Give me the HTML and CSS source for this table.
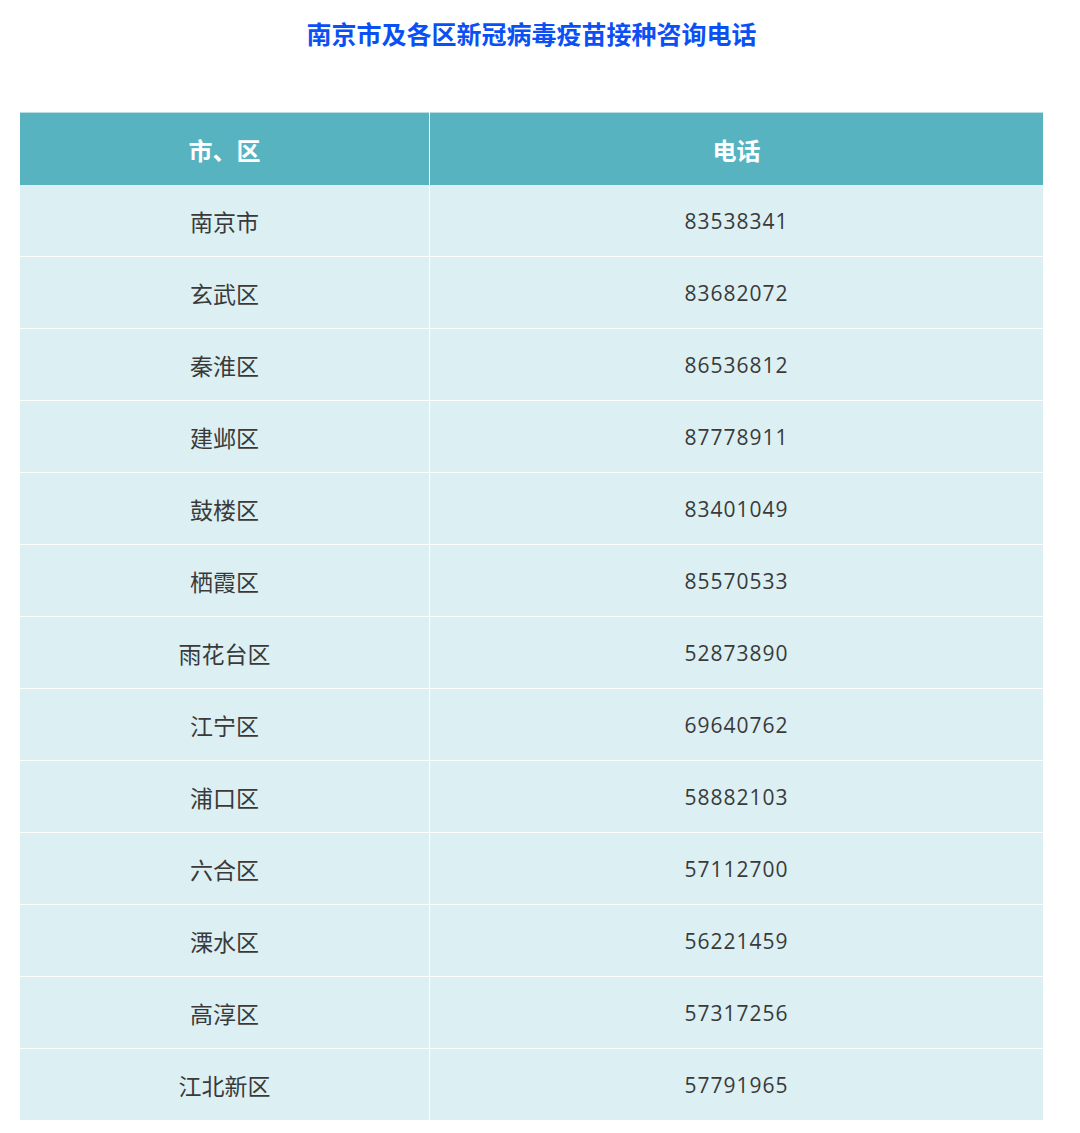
FILE: index.html
```html
<!DOCTYPE html>
<html lang="zh-CN">
<head>
<meta charset="utf-8">
<title>南京市及各区新冠病毒疫苗接种咨询电话</title>
<link rel="stylesheet" href="styles.css">
</head>
<body>
<div class="page">
  <h1 class="title">南京市及各区新冠病毒疫苗接种咨询电话</h1>
  <table class="phones">
    <thead>
      <tr><th class="col-area">市、区</th><th class="col-phone">电话</th></tr>
    </thead>
    <tbody>
      <tr><td>南京市</td><td class="num">83538341</td></tr>
      <tr><td>玄武区</td><td class="num">83682072</td></tr>
      <tr><td>秦淮区</td><td class="num">86536812</td></tr>
      <tr><td>建邺区</td><td class="num">87778911</td></tr>
      <tr><td>鼓楼区</td><td class="num">83401049</td></tr>
      <tr><td>栖霞区</td><td class="num">85570533</td></tr>
      <tr><td>雨花台区</td><td class="num">52873890</td></tr>
      <tr><td>江宁区</td><td class="num">69640762</td></tr>
      <tr><td>浦口区</td><td class="num">58882103</td></tr>
      <tr><td>六合区</td><td class="num">57112700</td></tr>
      <tr><td>溧水区</td><td class="num">56221459</td></tr>
      <tr><td>高淳区</td><td class="num">57317256</td></tr>
      <tr><td>江北新区</td><td class="num">57791965</td></tr>
    </tbody>
  </table>
</div>
</body>
</html>
```
FILE: styles.css
```css
html, body {
  margin: 0;
  padding: 0;
  background: #ffffff;
}
body {
  font-family: "Noto Sans CJK SC", "Noto Sans", sans-serif;
}
.page {
  width: 1023px;
  margin-left: 20px;
}
.title {
  margin: 0;
  padding-top: 16px;
  height: 112px;
  box-sizing: border-box;
  text-align: center;
  font-size: 25px;
  line-height: 34px;
  font-weight: 700;
  color: #0b50f4;
}
.phones {
  width: 1023px;
  border-collapse: collapse;
  table-layout: fixed;
}
.phones th,
.phones td {
  text-align: center;
  padding: 0;
  border: 1px solid #ffffff;
  border-top: 0;
  border-left: 0;
}
.phones tr > :last-child {
  border-right: 0;
}
.phones tbody tr:last-child td {
  border-bottom: 0;
}
.col-area { width: 409px; }
.phones th {
  background: #57b3bf;
  color: #ffffff;
  font-size: 24px;
  font-weight: 700;
  height: 72px;
  border-top: 1px solid #b9dde3;
  border-bottom: 0;
}
.phones td {
  background: #dcf0f4;
  color: #3a3a3a;
  font-size: 23px;
  height: 71px;
}
.phones td.num {
  font-family: "Open Sans", "Noto Sans", sans-serif;
  font-size: 21px;
  letter-spacing: 1px;
}
```
